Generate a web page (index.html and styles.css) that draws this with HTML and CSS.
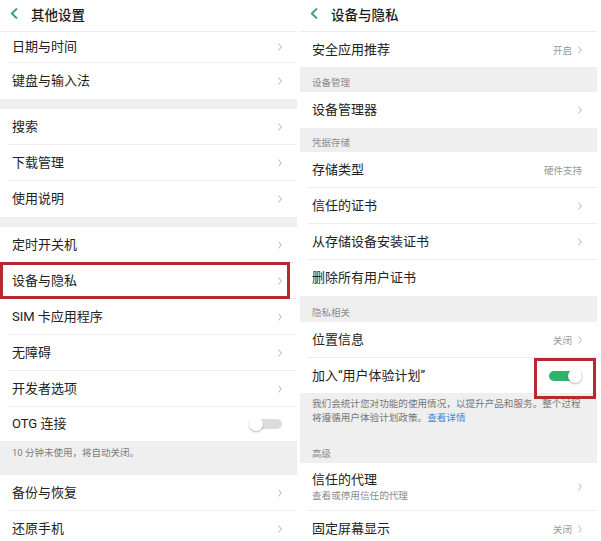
FILE: index.html
```html
<!DOCTYPE html>
<html lang="zh-CN">
<head>
    <meta charset="UTF-8">
    <meta name="viewport" content="width=device-width, initial-scale=1.0">
    <title>设置</title>
    <link rel="stylesheet" href="styles.css">
</head>
<body>

    <div class="screens">

        <!-- 其他设置 -->
        <section class="screen">
            <header class="bar">
                <svg class="back" viewBox="0 0 8 11"><path d="M6.5 1 L1.8 5.5 L6.5 10"/></svg>
                <span class="bar-title">其他设置</span>
            </header>

            <div class="row short"><span class="label">日期与时间</span><svg class="chev" viewBox="0 0 4 8"><path d="M0.6 0.6 L3.3 4 L0.6 7.4"/></svg></div>
            <div class="row end"><span class="label">键盘与输入法</span><svg class="chev" viewBox="0 0 4 8"><path d="M0.6 0.6 L3.3 4 L0.6 7.4"/></svg></div>
            <div class="gap"></div>

            <div class="row"><span class="label">搜索</span><svg class="chev" viewBox="0 0 4 8"><path d="M0.6 0.6 L3.3 4 L0.6 7.4"/></svg></div>
            <div class="row"><span class="label">下载管理</span><svg class="chev" viewBox="0 0 4 8"><path d="M0.6 0.6 L3.3 4 L0.6 7.4"/></svg></div>
            <div class="row end"><span class="label">使用说明</span><svg class="chev" viewBox="0 0 4 8"><path d="M0.6 0.6 L3.3 4 L0.6 7.4"/></svg></div>
            <div class="gap"></div>

            <div class="row"><span class="label">定时开关机</span><svg class="chev" viewBox="0 0 4 8"><path d="M0.6 0.6 L3.3 4 L0.6 7.4"/></svg></div>
            <div class="row mark-row"><span class="label">设备与隐私</span><svg class="chev" viewBox="0 0 4 8"><path d="M0.6 0.6 L3.3 4 L0.6 7.4"/></svg></div>
            <div class="row"><span class="label">SIM 卡应用程序</span><svg class="chev" viewBox="0 0 4 8"><path d="M0.6 0.6 L3.3 4 L0.6 7.4"/></svg></div>
            <div class="row"><span class="label">无障碍</span><svg class="chev" viewBox="0 0 4 8"><path d="M0.6 0.6 L3.3 4 L0.6 7.4"/></svg></div>
            <div class="row"><span class="label">开发者选项</span><svg class="chev" viewBox="0 0 4 8"><path d="M0.6 0.6 L3.3 4 L0.6 7.4"/></svg></div>
            <div class="row end otg">
                <span class="label">OTG 连接</span>
                <div class="switch"><span class="knob"></span></div>
            </div>
            <div class="hint">10 分钟未使用，将自动关闭。</div>

            <div class="row"><span class="label">备份与恢复</span><svg class="chev" viewBox="0 0 4 8"><path d="M0.6 0.6 L3.3 4 L0.6 7.4"/></svg></div>
            <div class="row"><span class="label">还原手机</span><svg class="chev" viewBox="0 0 4 8"><path d="M0.6 0.6 L3.3 4 L0.6 7.4"/></svg></div>
        </section>

        <!-- 设备与隐私 -->
        <section class="screen">
            <header class="bar">
                <svg class="back" viewBox="0 0 8 11"><path d="M6.5 1 L1.8 5.5 L6.5 10"/></svg>
                <span class="bar-title">设备与隐私</span>
            </header>

            <div class="row end first"><span class="label">安全应用推荐</span><span class="value">开启</span><svg class="chev" viewBox="0 0 4 8"><path d="M0.6 0.6 L3.3 4 L0.6 7.4"/></svg></div>

            <div class="group g-device">设备管理</div>
            <div class="row end"><span class="label">设备管理器</span><svg class="chev" viewBox="0 0 4 8"><path d="M0.6 0.6 L3.3 4 L0.6 7.4"/></svg></div>

            <div class="group g-cred">凭据存储</div>
            <div class="row"><span class="label">存储类型</span><span class="value bare">硬件支持</span></div>
            <div class="row"><span class="label">信任的证书</span><svg class="chev" viewBox="0 0 4 8"><path d="M0.6 0.6 L3.3 4 L0.6 7.4"/></svg></div>
            <div class="row"><span class="label">从存储设备安装证书</span><svg class="chev" viewBox="0 0 4 8"><path d="M0.6 0.6 L3.3 4 L0.6 7.4"/></svg></div>
            <div class="row end"><span class="label">删除所有用户证书</span></div>

            <div class="group g-privacy">隐私相关</div>
            <div class="row"><span class="label">位置信息</span><span class="value">关闭</span><svg class="chev" viewBox="0 0 4 8"><path d="M0.6 0.6 L3.3 4 L0.6 7.4"/></svg></div>
            <div class="row end plan">
                <span class="label">加入“用户体验计划”</span>
                <div class="mark-switch">
                    <div class="switch on"><span class="knob"></span></div>
                </div>
            </div>

            <div class="note">
                <p class="note-line">我们会统计您对功能的使用情况，以提升产品和服务。整个过程</p>
                <p class="note-line">将遵循用户体验计划政策。<a class="link" href="#">查看详情</a></p>
            </div>
            <div class="group g-adv">高级</div>

            <div class="row tall">
                <div class="label">
                    <div>信任的代理</div>
                    <div class="sub">查看或停用信任的代理</div>
                </div>
                <svg class="chev" viewBox="0 0 4 8"><path d="M0.6 0.6 L3.3 4 L0.6 7.4"/></svg>
            </div>
            <div class="row"><span class="label">固定屏幕显示</span><span class="value">关闭</span><svg class="chev" viewBox="0 0 4 8"><path d="M0.6 0.6 L3.3 4 L0.6 7.4"/></svg></div>
        </section>

    </div>

</body>
</html>
```

FILE: styles.css
```css
body {
    margin: 0;
    background-color: #fff;
    font-family: Roboto, "Noto Sans CJK SC", sans-serif;
    color: #222;
    height: 541px;
    overflow: hidden;
}

.screens {
    display: flex;
    gap: 3px;
}

.screen {
    width: 297px;
    flex: none;
    overflow: hidden;
}

/* 顶部标题栏 */
.bar {
    height: 32px;
    box-sizing: border-box;
    border-bottom: 1px solid #ececec;
    display: flex;
    align-items: center;
    padding: 0 0 4px 10px;
}

.back {
    width: 8px;
    height: 11px;
    fill: none;
    stroke: #3a9e7c;
    stroke-width: 1.8;
    stroke-linecap: round;
    stroke-linejoin: round;
}

.bar-title {
    margin-left: 13px;
    font-size: 13.5px;
    font-weight: 500;
    color: #1c1c1c;
}

/* 列表行 */
.row {
    height: 36px;
    box-sizing: border-box;
    margin-left: 8px;
    padding: 0 15px 0 4px;
    border-bottom: 1px solid #ededed;
    display: flex;
    align-items: center;
    font-size: 13px;
}

.row.short {
    height: 31px;
}

.row.first,
.row.plan {
    height: 35px;
}

.row.otg {
    height: 34px;
}

.row.tall {
    height: 48px;
}

.row.end {
    border-bottom: none;
}

.label {
    flex: 1;
    line-height: 16px;
}

.sub {
    font-size: 9.6px;
    color: #8a8a8a;
    line-height: 13px;
    margin-top: 1px;
}

.value {
    font-size: 9.5px;
    color: #999;
    margin-right: 6px;
}

.value.bare {
    margin-right: 0;
}

.chev {
    width: 4px;
    height: 8px;
    fill: none;
    stroke: #a9a9a9;
    stroke-width: 0.9;
}

/* 分组间隔 */
.gap {
    height: 10px;
    background-color: #efefef;
}

.group {
    background-color: #efefef;
    display: flex;
    align-items: flex-end;
    box-sizing: border-box;
    padding: 0 12px 3px;
    font-size: 9.5px;
    line-height: 13px;
    color: #8c8c8c;
}

.g-device { height: 25px; }
.g-cred { height: 24px; }
.g-privacy { height: 26px; }
.g-adv { height: 38px; }

.hint {
    height: 34px;
    box-sizing: border-box;
    background-color: #efefef;
    padding: 6px 12px 0;
    font-size: 9.5px;
    line-height: 12px;
    color: #7d7d7d;
}

.note {
    background-color: #efefef;
    padding: 4px 12px 0;
    font-size: 9.6px;
    line-height: 14px;
    color: #777;
}

.note-line {
    margin: 0;
    white-space: nowrap;
}

.link {
    color: #3f86d9;
    text-decoration: none;
}

/* 开关 */
.switch {
    width: 33px;
    height: 10px;
    border-radius: 5px;
    background-color: #dcdcdc;
    display: flex;
    align-items: center;
}

.switch.on {
    background-color: #2fb36a;
    justify-content: flex-end;
}

.knob {
    width: 14px;
    height: 14px;
    flex: none;
    border-radius: 50%;
    background-color: #fff;
    box-shadow: 0 1px 2px rgba(0, 0, 0, 0.3);
}

/* 红框标注 */
.mark-row {
    position: relative;
}

.mark-row::after {
    content: "";
    position: absolute;
    left: -8px;
    right: 7px;
    top: -1px;
    bottom: -1px;
    border: 3px solid #b8292f;
}

.mark-switch {
    position: relative;
}

.mark-switch::after {
    content: "";
    position: absolute;
    left: -15px;
    right: -14px;
    top: -13px;
    bottom: -18px;
    border: 3px solid #b8292f;
}
```
